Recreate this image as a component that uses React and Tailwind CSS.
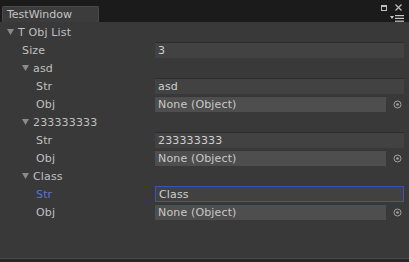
import React from "react";

const font = { fontFamily: '"DejaVu Sans", "Liberation Sans", sans-serif' };

function Tri() {
  return (
    <svg width="7" height="6" viewBox="0 0 7 6" className="shrink-0">
      <path d="M0 0 L7 0 L3.5 6 Z" fill="#8a8a8a" />
    </svg>
  );
}

function Row({ children }) {
  return <div className="h-[18px] flex items-center">{children}</div>;
}

function Label({ pl, text, blue }) {
  return (
    <div className={`w-[155px] shrink-0 ${pl} ${blue ? "text-[#5873d6]" : "text-[#c0c0c0]"}`}>
      {text}
    </div>
  );
}

function Foldout({ pl, text }) {
  return (
    <Row>
      <div className={`flex items-center gap-[4px] ${pl} text-[#c0c0c0]`}>
        <Tri />
        <span>{text}</span>
      </div>
    </Row>
  );
}

function TextField({ pl, label, value, focused }) {
  return (
    <Row>
      <Label pl={pl} text={label} blue={focused} />
      <div
        className={`h-[16px] flex-1 mr-[5px] flex items-center pl-[3px] text-[#cfcfcf] ${
          focused
            ? "bg-[#414141] border border-[#3f50b8]"
            : "bg-[#424242] border-t border-t-[#2c2c2c]"
        }`}
      >
        {value}
      </div>
    </Row>
  );
}

function ObjField({ pl }) {
  return (
    <Row>
      <Label pl={pl} text="Obj" />
      <div className="h-[16px] w-[231px] shrink-0 flex items-center pl-[3px] bg-[#4e4e4e] border-t border-t-[#363636] text-[#c8c8c8]">
        None (Object)
      </div>
      <div className="flex-1 flex justify-center items-center">
        <svg width="9" height="9" viewBox="0 0 9 9">
          <circle cx="4.5" cy="4.5" r="3.5" fill="none" stroke="#a0a0a0" strokeWidth="1" />
          <circle cx="4.5" cy="4.5" r="1.3" fill="#a0a0a0" />
        </svg>
      </div>
    </Row>
  );
}

export default function App() {
  return (
    <div className="w-[409px] h-[262px] bg-[#1b1b1b] flex flex-col text-[11px] tracking-[0.15px] leading-none overflow-hidden" style={font}>
      <div className="h-[22px] shrink-0 flex items-end relative">
        <div className="ml-[2px] w-[97px] h-[16px] bg-[#3c3c3c] border-t border-l border-r border-[#4a4a4a] rounded-t-[2px] flex items-center pl-[4px] text-[#c4c4c4] text-[11px] tracking-[0px]">
          TestWindow
        </div>
        <div className="absolute right-[7px] top-[4px] flex items-start gap-[8px]">
          <svg width="6" height="6" viewBox="0 0 6 6" className="mt-[1px]">
            <rect x="0.5" y="0.5" width="5" height="5" fill="none" stroke="#bdbdbd" />
            <rect x="0" y="0" width="6" height="2" fill="#bdbdbd" />
          </svg>
          <svg width="7" height="7" viewBox="0 0 7 7">
            <path d="M0.5 0.5 L6.5 6.5 M6.5 0.5 L0.5 6.5" stroke="#bdbdbd" strokeWidth="1.2" />
          </svg>
        </div>
        <div className="absolute right-[5px] top-[15px] flex items-start gap-[1px]">
          <svg width="4" height="3" viewBox="0 0 4 3" className="mt-[1px]">
            <path d="M0 0 L4 0 L2 3 Z" fill="#c8c8c8" />
          </svg>
          <svg width="9" height="7" viewBox="0 0 9 7">
            <rect x="0" y="0" width="9" height="1.2" fill="#c8c8c8" />
            <rect x="0" y="2.8" width="9" height="1.2" fill="#c8c8c8" />
            <rect x="0" y="5.6" width="9" height="1.2" fill="#c8c8c8" />
          </svg>
        </div>
      </div>
      <div className="flex-1 bg-[#393939] pt-[1px] flex flex-col">
        <Foldout pl="pl-[7px]" text="T Obj List" />
        <TextField pl="pl-[22px]" label="Size" value="3" />
        <Foldout pl="pl-[22px]" text="asd" />
        <TextField pl="pl-[36px]" label="Str" value="asd" />
        <ObjField pl="pl-[36px]" />
        <Foldout pl="pl-[22px]" text="233333333" />
        <TextField pl="pl-[36px]" label="Str" value="233333333" />
        <ObjField pl="pl-[36px]" />
        <Foldout pl="pl-[22px]" text="Class" />
        <TextField pl="pl-[36px]" label="Str" value="Class" focused />
        <ObjField pl="pl-[36px]" />
        <div className="flex-1" />
        <div className="h-[1px] bg-[#4a4a4a]" />
      </div>
      <div className="h-[3px] shrink-0 bg-[#262626]" />
    </div>
  );
}
